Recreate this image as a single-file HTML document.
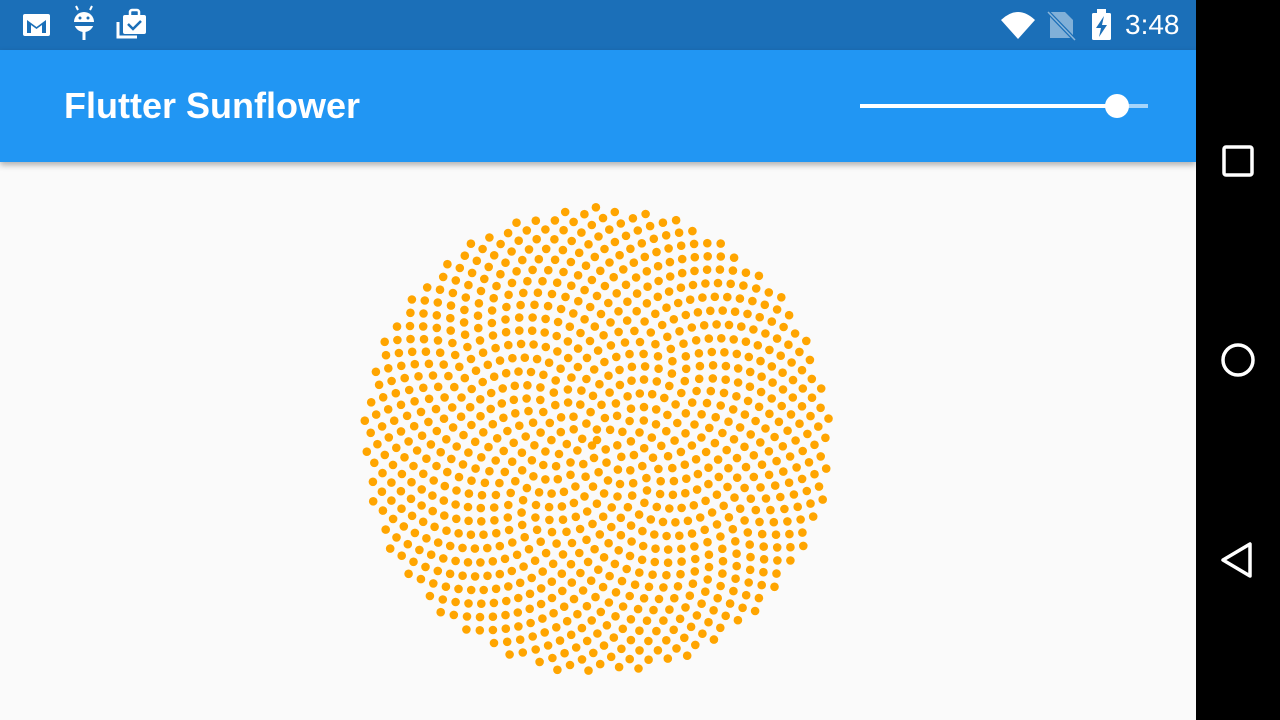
<!DOCTYPE html>
<html><head><meta charset="utf-8"><style>
html,body{margin:0;width:1280px;height:720px;overflow:hidden}
body{background:#fafafa;font-family:"Liberation Sans",sans-serif;position:relative}
#status{position:absolute;left:0;top:0;width:1196px;height:50px;background:#1b6fb8}
#bar{position:absolute;left:0;top:50px;width:1196px;height:112px;background:#2196f3;box-shadow:0 3px 6px rgba(0,0,0,.3)}
#title{position:absolute;left:64px;color:#fff;font-size:36px;font-weight:bold}
#nav{position:absolute;left:1196px;top:0;width:84px;height:720px;background:#000}
#time{position:absolute;left:1125px;top:9px;color:#fff;font-size:28px}
</style></head><body>
<div id="status">
<svg width="1196" height="50" style="position:absolute;left:0;top:0">
<rect x="23" y="14" width="27" height="22" rx="2" fill="#fff"/>
<path d="M27 20 L36.5 27 L46 20 V33 H42 V25 L36.5 29 L31 25 V33 H27Z" fill="#1b6fb8"/>
<circle cx="84" cy="22" r="10" fill="#fff"/><rect x="74" y="22" width="20" height="4" fill="#1b6fb8"/>
<circle cx="80" cy="18" r="1.5" fill="#1b6fb8"/><circle cx="88" cy="18" r="1.5" fill="#1b6fb8"/>
<path d="M78 10 L76 6 M90 10 L92 6" stroke="#fff" stroke-width="2"/>
<rect x="82.5" y="28" width="3" height="12" fill="#fff"/>
<path d="M118 22 V37 H137" stroke="#fff" stroke-width="3" fill="none"/>
<rect x="123" y="15" width="23" height="19" rx="2" fill="#fff"/>
<rect x="130" y="10" width="9" height="7" rx="2" fill="none" stroke="#fff" stroke-width="2.5"/>
<path d="M128 24 L133 29 L141 21" stroke="#1b6fb8" stroke-width="2.5" fill="none"/>
<path d="M1001 20 Q1018 4 1035 20 L1018 39Z" fill="#fff"/>
<path d="M1050 12 H1065 L1073 20 V38 H1050Z" fill="#fff" opacity=".45"/>
<path d="M1048 12 L1075 40" stroke="#1b6fb8" stroke-width="4"/>
<path d="M1048 12 L1075 40" stroke="#fff" stroke-width="1.5" opacity=".5"/>
<rect x="1092" y="13" width="19" height="27" rx="1.5" fill="#fff"/><rect x="1097" y="9" width="9" height="5" fill="#fff"/>
<path d="M1104 16 L1096 28 H1101 L1099 37 L1107 25 H1102Z" fill="#1b6fb8"/>
</svg>
<div id="time">3:48</div>
</div>
<div id="bar">
<div id="title" style="top:35px">Flutter Sunflower</div>
<svg width="300" height="40" style="position:absolute;left:855px;top:36px">
<rect x="5" y="18" width="258" height="4" fill="#fff"/><rect x="263" y="18" width="30" height="4" fill="#fff" opacity=".6"/>
<circle cx="262" cy="20" r="12" fill="#fff"/>
</svg>
</div>
<div id="nav"><svg width="84" height="720">
<rect x="28" y="147" width="28" height="28" rx="2" fill="none" stroke="#fff" stroke-width="3.5"/>
<circle cx="42" cy="360" r="15" fill="none" stroke="#fff" stroke-width="3.5"/>
<path d="M54 544 V576 L27 560Z" fill="none" stroke="#fff" stroke-width="3.5" stroke-linejoin="round"/>
</svg></div>
<svg id="sf" width="1196" height="720" style="position:absolute;left:0;top:0"></svg>
<script>
var s=document.getElementById('sf'),h='',n=1000,k=7.4,cx=597,cy=440,phi=(Math.sqrt(5)+1)/2,rot=0.095;
for(var i=0;i<n;i++){var t=i*2*Math.PI/phi+rot,r=Math.sqrt(i)*k;
h+='<circle cx="'+(cx+Math.cos(t)*r).toFixed(1)+'" cy="'+(cy-Math.sin(t)*r).toFixed(1)+'" r="4.3" fill="#ffa500"/>';}
s.innerHTML=h;
</script>
</body></html>
